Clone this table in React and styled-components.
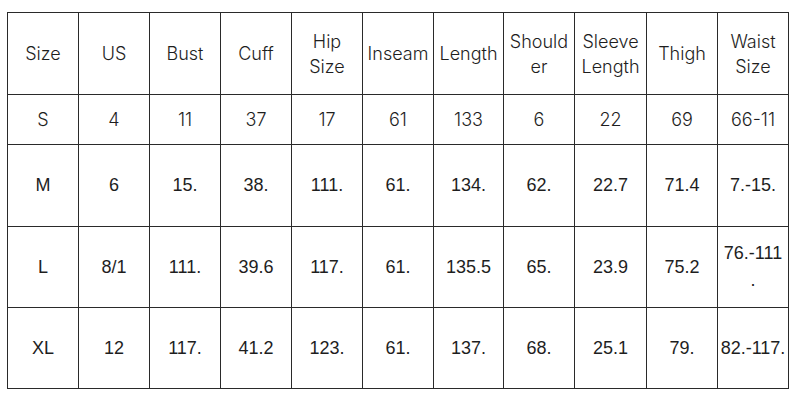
import React from 'react';
import styled, {createGlobalStyle, css} from 'styled-components';

const GlobalStyle = createGlobalStyle`
  html, body {
    margin: 0;
    padding: 0;
    background: #fff;
  }
`;

const Page = styled.div`
  width: 800px;
  height: 400px;
  padding: 12px 0 0 7px;
  box-sizing: border-box;
`;

const Table = styled.table`
  border-collapse: collapse;
  table-layout: fixed;
  width: 781px;
  color: #1e1e1e;
  border: 1px solid #2a2a2a;
`;

const Cell = styled.td`
  border: 1px solid #2a2a2a;
  padding: 0 1px;
  text-align: center;
  vertical-align: middle;
  font-family: Inter, "Liberation Sans", sans-serif;
  font-weight: 350;
  font-size: 18px;
  line-height: 25px;
  white-space: pre-line;
  overflow: hidden;

  ${props => props.$arial && css`
    font-family: "Liberation Sans", Arial, sans-serif;
    font-weight: 400;
    line-height: 27px;
  `}
`;

const Row = styled.tr`
  height: ${props => props.$h}px;
`;

const headers = ['Size', 'US', 'Bust', 'Cuff', 'Hip\nSize', 'Inseam', 'Length', 'Should\ner', 'Sleeve\nLength', 'Thigh', 'Waist\nSize'];

const rows = [
  {h: 50, arial: false, cells: ['S', '4', '11', '37', '17', '61', '133', '6', '22', '69', '66-11']},
  {h: 82, arial: true, cells: ['M', '6', '15.', '38.', '111.', '61.', '134.', '62.', '22.7', '71.4', '7.-15.']},
  {h: 81, arial: true, cells: ['L', '8/1', '111.', '39.6', '117.', '61.', '135.5', '65.', '23.9', '75.2', '76.-111\n.']},
  {h: 81, arial: true, cells: ['XL', '12', '117.', '41.2', '123.', '61.', '137.', '68.', '25.1', '79.', '82.-117.']},
];

const widths = [71, 71, 71, 71, 71, 71, 70, 71, 72, 71, 71];

export default function App() {
  return (
    <Page>
      <GlobalStyle/>
      <Table>
        <colgroup>
          {widths.map((w, i) => <col key={i} width={w}/>)}
        </colgroup>
        <tbody>
          <Row $h={82}>
            {headers.map(h => <Cell key={h}>{h}</Cell>)}
          </Row>
          {rows.map(r => (
            <Row key={r.cells[0]} $h={r.h}>
              {r.cells.map((c, i) => (
                <Cell key={i} $arial={r.arial}>{c}</Cell>
              ))}
            </Row>
          ))}
        </tbody>
      </Table>
    </Page>
  );
}
